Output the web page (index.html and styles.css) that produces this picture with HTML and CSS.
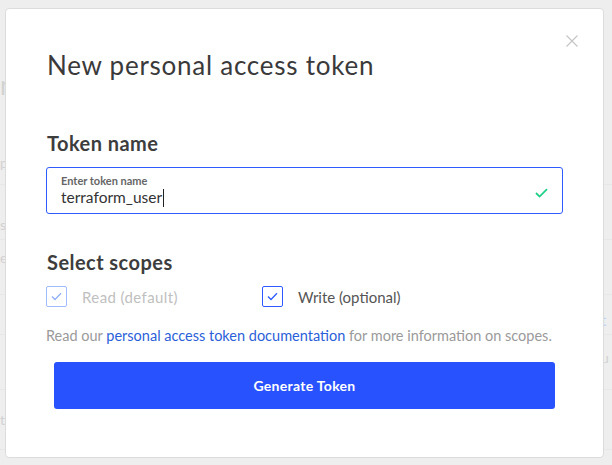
FILE: index.html
```html
<!DOCTYPE html>
<html lang="en">
<head>
<meta charset="utf-8">
<title>New personal access token</title>
<link rel="stylesheet" href="styles.css">
</head>
<body>
<div class="page">
  <div class="ghost-row r1"><span class="gl big">n</span><span class="gr"></span></div>
  <div class="ghost-row r2"><span class="gl">p</span><span class="gr"></span></div>
  <div class="ghost-row r3"><span class="gl">s:</span><span class="gr"></span></div>
  <div class="ghost-row r4"><span class="gl">e</span><span class="gr"></span></div>
  <div class="ghost-row r5"><span class="gl"></span><span class="gr link">t</span></div>
  <div class="ghost-row r6"><span class="gl"></span><span class="gr">u</span></div>
  <div class="ghost-row r7"><span class="gl">t</span><span class="gr"></span></div>
</div>

<div class="modal" role="dialog" aria-labelledby="modal-title">
  <button class="close" aria-label="Close">
    <svg width="12" height="12" viewBox="0 0 12 12"><path d="M0.5 0.5 L11.5 11.5 M11.5 0.5 L0.5 11.5" stroke="#c4c4c4" stroke-width="1.1" fill="none"/></svg>
  </button>
  <h1 class="title" id="modal-title">New personal access token</h1>

  <h2 class="section-title first">Token name</h2>
  <div class="field">
    <div class="field-label">Enter token name</div>
    <div class="field-value">terraform_user<span class="caret"></span></div>
    <svg class="valid" width="13" height="10" viewBox="0 0 13 10"><path d="M1 5 L4.6 8.6 L12 1.2" stroke="#1fcf87" stroke-width="1.8" fill="none"/></svg>
  </div>

  <h2 class="section-title">Select scopes</h2>
  <div class="scopes">
    <label class="scope disabled">
      <span class="box"><svg width="11" height="9" viewBox="0 0 11 9"><path d="M1 4.5 L4 7.5 L10 1.2" stroke="currentColor" stroke-width="1.3" fill="none"/></svg></span>
      <span class="scope-label">Read (default)</span>
    </label>
    <label class="scope">
      <span class="box"><svg width="11" height="9" viewBox="0 0 11 9"><path d="M1 4.5 L4 7.5 L10 1.2" stroke="currentColor" stroke-width="1.3" fill="none"/></svg></span>
      <span class="scope-label">Write (optional)</span>
    </label>
  </div>

  <p class="help">Read our <a href="#">personal access token documentation</a> for more information on scopes.</p>

  <button class="primary">Generate Token</button>
</div>
</body>
</html>
```

FILE: styles.css
```css
* { box-sizing: border-box; }

html, body {
  margin: 0;
  padding: 0;
}

body {
  width: 612px;
  height: 465px;
  overflow: hidden;
  background: #eeeeee;
  position: relative;
  font-family: Lato, "Open Sans", "Liberation Sans", sans-serif;
}

/* faint page behind the dialog */
.page {
  width: 612px;
  color: #d2d2d2;
  font-size: 14px;
}

.ghost-row {
  display: flex;
  justify-content: space-between;
  align-items: center;
  border-bottom: 1px solid #e7e7e7;
}

.gl {
  white-space: nowrap;
}

.gr {
  width: 11px;
  white-space: nowrap;
}

.gl.big { font-size: 26px; }
.gr.link { color: #c3cff5; font-size: 15px; }

.r1 { height: 110px; padding-top: 60px; border-bottom-color: transparent; }
.r2 { height: 75px; padding-top: 30px; }
.r3 { height: 55px; padding-top: 25px; }
.r4 { height: 55px; padding-bottom: 20px; }
.r5 { height: 40px; padding-top: 10px; }
.r6 { height: 55px; padding-bottom: 10px; }
.r7 { height: 60px; }

/* dialog */
.modal {
  position: absolute;
  left: 5px;
  top: 8px;
  width: 599px;
  height: 450px;
  background: #ffffff;
  border: 1px solid #dcdcdc;
  border-radius: 4px;
  padding: 41px 40px 0 40px;
  color: #3d3d3d;
  z-index: 1;
}

.close {
  position: absolute;
  top: 26px;
  right: 25px;
  width: 12px;
  height: 12px;
  padding: 0;
  border: 0;
  background: none;
  display: block;
}

.close svg { display: block; }

.title {
  margin: 0;
  font-size: 26px;
  line-height: 30px;
  font-weight: 400;
  letter-spacing: 0.75px;
  color: #3a3a3a;
  padding-left: 1px;
}

.section-title {
  margin: 36px 0 0;
  font-size: 20px;
  line-height: 24px;
  font-weight: 700;
  letter-spacing: 0.45px;
  color: #3d3d3d;
  padding-left: 1px;
}

.section-title.first { margin-top: 51px; }

.field {
  position: relative;
  margin-top: 12px;
  height: 47px;
  border: 1px solid #2f5cff;
  border-radius: 3px;
  padding: 6px 14px 0 14px;
}

.field-label {
  font-size: 11px;
  line-height: 13px;
  font-weight: 700;
  color: #666666;
}

.field-value {
  font-size: 15.5px;
  line-height: 21px;
  color: #333333;
  display: flex;
  align-items: center;
}

.caret {
  display: inline-block;
  width: 1px;
  height: 18px;
  background: #222;
  margin-left: 1px;
}

.valid {
  position: absolute;
  right: 14px;
  top: 20px;
}

.scopes {
  margin-top: 12px;
  display: grid;
  grid-template-columns: 216px auto;
}

.scope {
  display: flex;
  align-items: center;
  gap: 15px;
}

.box {
  width: 21px;
  height: 21px;
  border: 1px solid #2e5bff;
  border-radius: 2px;
  display: flex;
  align-items: center;
  justify-content: center;
  color: #2e5bff;
}

.box svg { display: block; }

.scope-label {
  font-size: 15px;
  color: #555555;
}

.scope.disabled .box {
  border-color: #9ebcff;
  color: #8fb0f5;
}

.scope.disabled .scope-label {
  color: #c0c0c0;
  letter-spacing: 0.4px;
}

.help {
  margin: 20px 0 0;
  font-size: 14.5px;
  line-height: 18px;
  color: #9a9a9a;
}

.help a {
  color: #2b5fd9;
  text-decoration: none;
}

.primary {
  display: block;
  margin: 17px 0 0 8px;
  width: 501px;
  height: 47px;
  border: 0;
  border-radius: 3px;
  background: #2952ff;
  color: #ffffff;
  font-family: Lato, "Open Sans", "Liberation Sans", sans-serif;
  font-size: 14px;
  font-weight: 700;
  letter-spacing: 0.3px;
}
```
